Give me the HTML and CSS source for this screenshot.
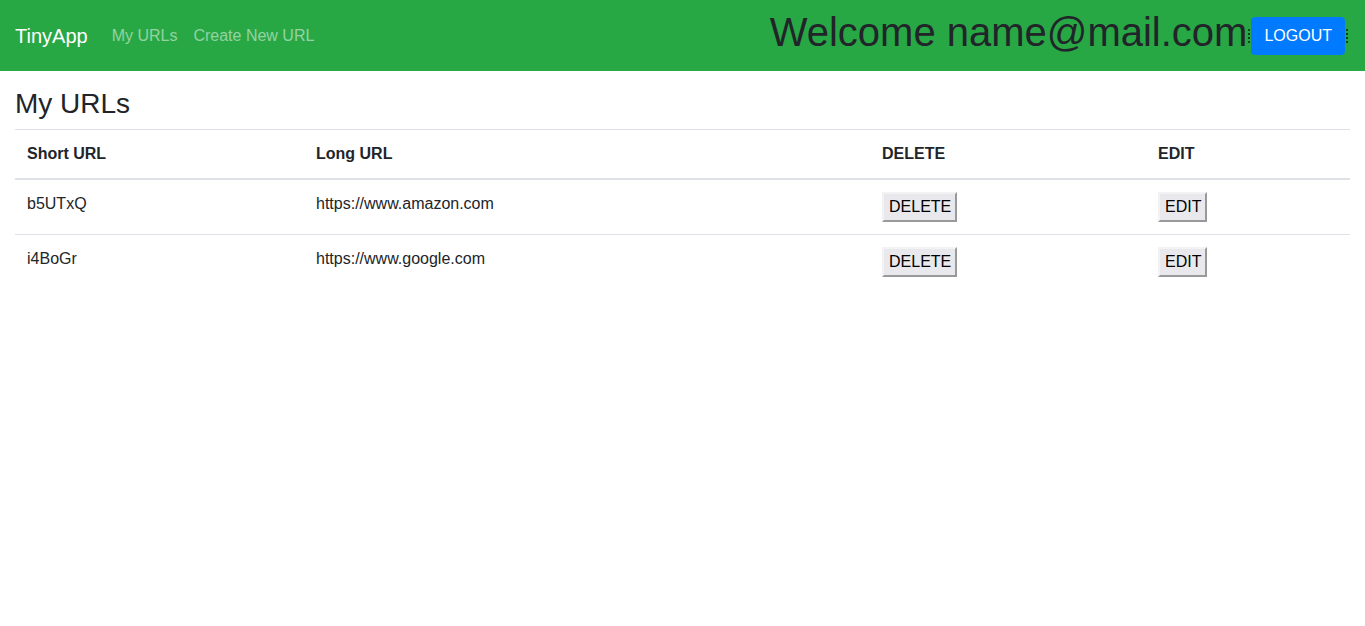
FILE: index.html
```html
<!DOCTYPE html>
<html lang="en">
<head>
<meta charset="utf-8">
<title>TinyApp</title>
<link rel="stylesheet" href="styles.css">
</head>
<body>
<nav class="navbar">
  <a class="brand" href="#">TinyApp</a>
  <div class="nav-links">
    <a class="nav-link" href="#">My URLs</a>
    <a class="nav-link" href="#">Create New URL</a>
  </div>
  <div class="nav-right">
    <h1 class="welcome">Welcome name@mail.com</h1>
    <span class="dots"></span>
    <button class="btn-logout" type="button">LOGOUT</button>
    <span class="dots"></span>
  </div>
</nav>
<main class="container">
  <h3 class="title">My URLs</h3>
  <table class="table">
    <thead>
      <tr>
        <th class="c1">Short URL</th>
        <th class="c2">Long URL</th>
        <th class="c3">DELETE</th>
        <th class="c4">EDIT</th>
      </tr>
    </thead>
    <tbody>
      <tr>
        <td>b5UTxQ</td>
        <td>https://www.amazon.com</td>
        <td><button class="btn-plain" type="button">DELETE</button></td>
        <td><button class="btn-plain" type="button">EDIT</button></td>
      </tr>
      <tr>
        <td>i4BoGr</td>
        <td>https://www.google.com</td>
        <td><button class="btn-plain" type="button">DELETE</button></td>
        <td><button class="btn-plain" type="button">EDIT</button></td>
      </tr>
    </tbody>
  </table>
</main>
</body>
</html>
```

FILE: styles.css
```css
* { box-sizing: border-box; }
html, body { margin: 0; }
body {
  font-family: "Liberation Sans", Arial, sans-serif;
  font-size: 16px;
  line-height: 1.5;
  color: #212529;
  background: #fff;
}
.navbar {
  display: flex;
  align-items: center;
  background: #28a745;
  padding: 8px 16px 8px 15px;
  height: 71px;
}
.brand {
  font-size: 20px;
  line-height: 30px;
  color: #fff;
  text-decoration: none;
  margin-right: 16px;
  padding: 5px 0;
}
.nav-links { display: flex; }
.nav-link {
  color: rgba(255,255,255,0.5);
  text-decoration: none;
  padding: 8px;
}
.nav-right {
  margin-left: auto;
  display: flex;
  align-items: center;
}
.welcome {
  margin: 0 0 8px 0;
  font-size: 40px;
  line-height: 48px;
  font-weight: normal;
  color: #212529;
}
.dots {
  display: inline-block;
  width: 2px;
  height: 14px;
  margin: 0 1px;
  border-left: 2px dotted rgba(0,0,0,0.6);
}
.btn-logout {
  font-family: inherit;
  font-size: 16px;
  line-height: 24px;
  color: #fff;
  background: #007bff;
  border: 1px solid #007bff;
  border-radius: 4px;
  padding: 6px 12px;
}
.container {
  padding: 16px 15px 0;
}
.title {
  font-size: 28px;
  line-height: 1.2;
  font-weight: 500;
  margin: 0 0 8px;
}
.table {
  width: 100%;
  border-collapse: collapse;
}
.table th, .table td {
  text-align: left;
  vertical-align: top;
  padding: 12px;
  border-top: 1px solid #dee2e6;
}
.table th { font-weight: bold; vertical-align: bottom; }
.table thead th { border-bottom: 2px solid #dee2e6; }
.c1 { width: 289px; }
.c2 { width: 566px; }
.c3 { width: 276px; }
.btn-plain {
  font-family: inherit;
  font-size: 16px;
  line-height: 24px;
  color: #000;
  background: #e9e9ed;
  padding: 1px 4px 1px 5px;
  border: 2px solid;
  border-color: #f3f3f3 #999 #999 #f3f3f3;
  border-radius: 0;
}
```
